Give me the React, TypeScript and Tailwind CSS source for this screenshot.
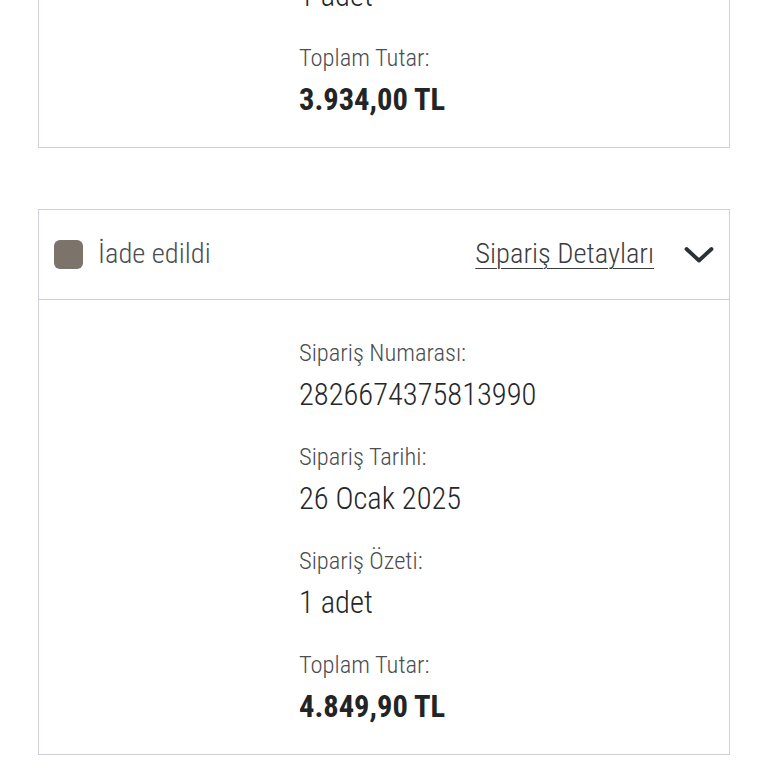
function Field({ label, value, bold }: { label: string; value: string; bold?: boolean }) {
  return (
    <div className="flex flex-col gap-[8px]">
      <div className="text-[24.5px] leading-[32px] text-[#4b4d50] font-light">{label}</div>
      <div className={bold ? "text-[30.5px] leading-[36px] text-[#222426] font-bold" : "text-[30.5px] leading-[36px] text-[#25272a] font-light"}>{value}</div>
    </div>
  );
}

function Details({ items }: { items: { label: string; value: string; bold?: boolean }[] }) {
  return (
    <div className="flex flex-col gap-[28px] pl-[260px] pt-[37px] pb-[29px]">
      {items.map((it) => (
        <Field key={it.label} {...it} />
      ))}
    </div>
  );
}

export default function App() {
  return (
    <div className="h-[768px] w-full overflow-hidden bg-white font-['Roboto_Condensed',sans-serif]">
      <div className="mx-[38px] mt-[-100px] border border-[#cdd1d5]">
        <Details
          items={[
            { label: "Sipariş Özeti:", value: "1 adet" },
            { label: "Toplam Tutar:", value: "3.934,00 TL", bold: true },
          ]}
        />
      </div>
      <div className="mx-[38px] mt-[61px] border border-[#cdd1d5]">
        <div className="flex h-[90px] items-center border-b border-[#cdd1d5] pl-[15px] pr-[15px]">
          <div className="h-[29px] w-[29px] rounded-[6px] bg-[#7c736b]" />
          <span className="ml-[15px] text-[28.5px] font-light text-[#4b4d50]">İade edildi</span>
          <span className="ml-auto text-[28.5px] font-light text-[#3a3c3f] underline underline-offset-[5px] decoration-1">
            Sipariş Detayları
          </span>
          <svg className="ml-[30px]" width="30" height="18" viewBox="0 0 30 18" fill="none">
            <path d="M2.5 3 L15 14.5 L27.5 3" stroke="#2c3136" strokeWidth="3.8" strokeLinecap="round" strokeLinejoin="round" />
          </svg>
        </div>
        <Details
          items={[
            { label: "Sipariş Numarası:", value: "2826674375813990" },
            { label: "Sipariş Tarihi:", value: "26 Ocak 2025" },
            { label: "Sipariş Özeti:", value: "1 adet" },
            { label: "Toplam Tutar:", value: "4.849,90 TL", bold: true },
          ]}
        />
      </div>
    </div>
  );
}
